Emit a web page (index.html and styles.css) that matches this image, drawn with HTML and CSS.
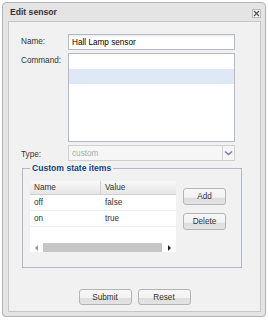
FILE: index.html
```html
<!DOCTYPE html>
<html lang="en">
<head>
    <meta charset="UTF-8">
    <title>Edit sensor</title>
    <link rel="stylesheet" href="styles.css">
</head>
<body>
    <div class="window">
        <div class="window-header">
            <span class="window-title">Edit sensor</span>
            <span class="close-btn">
                <svg width="7" height="7" viewBox="0 0 7 7"><path d="M1 1L6 6M6 1L1 6" stroke="#555" stroke-width="1.3"/></svg>
            </span>
        </div>

        <div class="window-body">
            <div class="form-row">
                <label class="field-label">Name:</label>
                <div class="text-input">Hall Lamp sensor</div>
            </div>
            <div class="form-row command-row">
                <label class="field-label">Command:</label>
                <div class="list-box">
                    <div class="list-item"></div>
                    <div class="list-item selected"></div>
                </div>
            </div>
            <div class="form-row type-row">
                <label class="field-label">Type:</label>
                <div class="combo">
                    <span class="combo-text">custom</span>
                    <span class="combo-trigger">
                        <svg width="9" height="6" viewBox="0 0 9 6"><path d="M1 1.5L4.5 4.5L8 1.5" fill="none" stroke="#6b82b3" stroke-width="1.6"/></svg>
                    </span>
                </div>
            </div>

            <fieldset class="state-items">
                <legend>Custom state items</legend>
                <div class="state-inner">
                    <div class="grid">
                        <div class="grid-header">
                            <div class="col-name">Name</div>
                            <div class="col-value">Value</div>
                        </div>
                        <div class="grid-row">
                            <div class="col-name">off</div>
                            <div class="col-value">false</div>
                        </div>
                        <div class="grid-row">
                            <div class="col-name">on</div>
                            <div class="col-value">true</div>
                        </div>
                        <div class="grid-empty"></div>
                        <div class="hscroll">
                            <span class="arrow-left"></span>
                            <span class="thumb"></span>
                            <span class="arrow-right"></span>
                        </div>
                    </div>
                    <div class="side-buttons">
                        <button class="btn">Add</button>
                        <button class="btn">Delete</button>
                    </div>
                </div>
            </fieldset>

            <div class="footer">
                <button class="btn footer-btn">Submit</button>
                <button class="btn footer-btn">Reset</button>
            </div>
        </div>
    </div>
</body>
</html>
```

FILE: styles.css
```css
* {
    margin: 0;
    padding: 0;
    box-sizing: border-box;
}

body {
    font-family: "Liberation Sans", Arial, sans-serif;
    font-size: 8.2px;
    color: #333;
    background: #fff;
    padding: 2px 0 0 2px;
}

.window {
    width: 264px;
    height: 315px;
    border: 1px solid #b4b4b4;
    border-radius: 4px;
    background: #e4e4e4;
    padding: 0 4px 4px 5px;
    display: flex;
    flex-direction: column;
    box-shadow: 0 1px 1px rgba(0,0,0,0.1);
}

.window-header {
    height: 18px;
    display: flex;
    align-items: center;
    justify-content: space-between;
    padding-left: 2px;
}

.window-title {
    font-weight: bold;
    color: #333;
    font-size: 8.6px;
}

.close-btn {
    width: 9px;
    height: 9px;
    border: 1px solid #bbb;
    background: #f6f6f6;
    display: flex;
    align-items: center;
    justify-content: center;
    margin-top: 3px;
}

.window-body {
    flex: 1;
    background: #f1f1f1;
    border: 1px solid #c6c6c6;
    padding: 12px 0 0 12px;
    display: flex;
    flex-direction: column;
}

.form-row {
    display: flex;
    margin-bottom: 3px;
}

.field-label {
    width: 47px;
    padding-top: 3px;
    color: #333;
}

.text-input {
    width: 167px;
    height: 16px;
    border: 1px solid #b5b8c8;
    background: linear-gradient(#ececec 0, #fff 3px);
    padding: 3px 3px;
    color: #000;
}

.list-box {
    width: 167px;
    height: 89px;
    border: 1px solid #b5b8c8;
    background: #fff;
}

.list-item {
    height: 15px;
}

.list-item.selected {
    background: #dfe8f6;
}

.type-row {
    margin-bottom: 2px;
}

.type-row .field-label {
    padding-top: 5px;
}

.combo {
    width: 167px;
    height: 16px;
    border: 1px solid #d0d0d0;
    background: #f6f6f6;
    display: flex;
    justify-content: space-between;
}

.combo-text {
    color: #aaa;
    padding: 3px 3px;
}

.combo-trigger {
    width: 12px;
    border-left: 1px solid #d0d0d0;
    display: flex;
    align-items: center;
    justify-content: center;
}

.state-items {
    width: 220px;
    margin-left: 1px;
    border: 1px solid #b5b8c8;
    padding: 0 7px 15px 7px;
}

.state-items legend {
    font-weight: bold;
    font-size: 8.6px;
    color: #15428b;
    padding: 0 2px;
}

.state-inner {
    display: flex;
    gap: 7px;
    margin-top: 8px;
}

.grid {
    width: 146px;
    height: 71px;
    background: #fff;
    display: flex;
    flex-direction: column;
}

.grid-header {
    display: flex;
    height: 14px;
    background: linear-gradient(#f9f9f9, #e5e5e5);
    border-bottom: 1px solid #d0d0d0;
}

.grid-header .col-name {
    border-right: 1px solid #d0d0d0;
}

.grid-row {
    display: flex;
    height: 16px;
    border-bottom: 1px solid #ededed;
    align-items: center;
}

.col-name {
    width: 71px;
    padding-left: 4px;
    display: flex;
    align-items: center;
}

.col-value {
    padding-left: 4px;
    display: flex;
    align-items: center;
}

.grid-empty {
    flex: 1;
}

.hscroll {
    height: 9px;
    display: flex;
    align-items: center;
    padding: 0 4px 0 5px;
}

.arrow-left {
    width: 0;
    height: 0;
    border-top: 3px solid transparent;
    border-bottom: 3px solid transparent;
    border-right: 3px solid #999;
    margin-right: 5px;
}

.thumb {
    width: 119px;
    height: 9px;
    background: #c6c6c6;
}

.arrow-right {
    width: 0;
    height: 0;
    border-top: 3px solid transparent;
    border-bottom: 3px solid transparent;
    border-left: 3px solid #222;
    margin-left: 6px;
}

.side-buttons {
    display: flex;
    flex-direction: column;
    gap: 8px;
    padding-top: 7px;
}

.btn {
    width: 43px;
    height: 17px;
    border: 1px solid #b4b4b4;
    border-radius: 3px;
    background: linear-gradient(#f7f7f7 0, #f3f3f3 55%, #dedede 60%, #e4e4e4 100%);
    font-family: "Liberation Sans", Arial, sans-serif;
    font-size: 8.2px;
    color: #333;
}

.footer {
    display: flex;
    justify-content: center;
    gap: 6px;
    margin-top: 21px;
    padding-right: 12px;
}

.footer-btn {
    width: 53px;
    height: 16px;
}
```
